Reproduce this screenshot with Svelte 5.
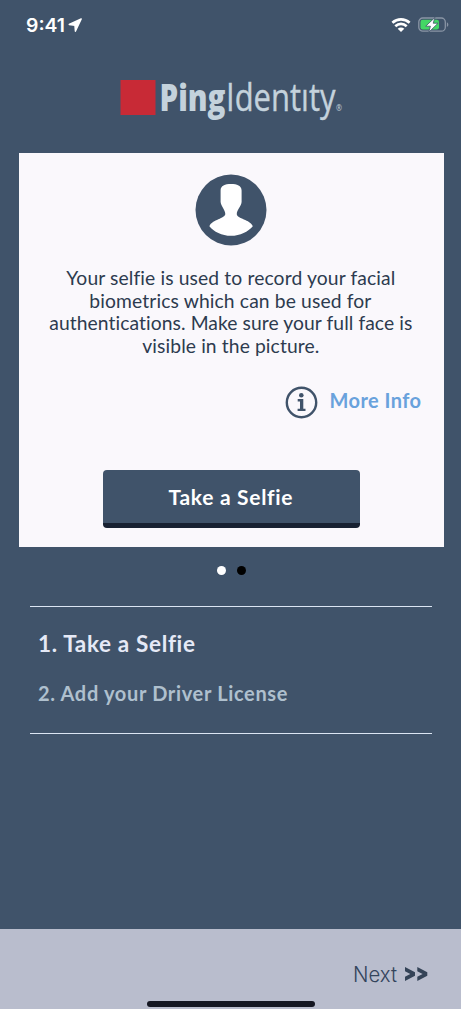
<script>
  const lines = [
    { text: 'Your selfie is used to record your facial', width: 329 },
    { text: 'biometrics which can be used for', width: 282 },
    { text: 'authentications. Make sure your full face is', width: 363 },
    { text: 'visible in the picture.', width: 177 }
  ];
</script>

<main>
  <header class="status">
    <svg class="time" width="64" height="24" viewBox="0 0 64 24">
      <text x="0" y="19.500" textLength="39" lengthAdjust="spacingAndGlyphs">9:41</text>
      <path d="M55.200 6.900 43.200 12.500l5.700.7.500 6z" fill="#fff" stroke="#fff" stroke-width="1.400" stroke-linejoin="round" />
    </svg>
    <svg class="wifi" width="20" height="16" viewBox="0 0 20 16">
      <g fill="none" stroke="#fff" stroke-width="2.700">
        <path d="M1.400 5.800c5-4.500 12.200-4.500 17.200 0" />
        <path d="M4.300 9.200c3.300-3 8.100-3 11.400 0" />
      </g>
      <path d="M6.700 11.800c1.900-1.700 4.700-1.700 6.600 0L10 15z" fill="#fff" />
    </svg>
    <svg class="battery" width="31" height="16" viewBox="0 0 31 16">
      <rect x=".8" y="1" width="26.500" height="13.200" rx="4" fill="none" stroke="#8995a5" stroke-width="1.300" />
      <rect x="2.500" y="2.800" width="18.500" height="9.700" rx="2.300" fill="#43d765" />
      <path d="M28.900 5.300v4.800c2-1 2-3.800 0-4.800z" fill="#8995a5" />
      <path d="m17 .4-9.300 8.800h4.700l-1.600 6 9.300-9h-4.900z" fill="#fff" stroke="#40536a" stroke-width=".8" />
    </svg>
  </header>

  <div class="brand">
    <svg width="223" height="44" viewBox="0 0 223 44">
      <rect x=".5" y="3" width="35" height="35" fill="#c82a36" />
      <g class="logo-text">
        <text class="ping" x="39.500" y="34" textLength="66" lengthAdjust="spacingAndGlyphs">Ping</text>
        <text class="identity" x="106" y="34" textLength="109.500" lengthAdjust="spacingAndGlyphs">Identıty</text>
        <text class="registered" x="216" y="33.500" textLength="6" lengthAdjust="spacingAndGlyphs">®</text>
      </g>
    </svg>
  </div>

  <section class="card">
    <svg class="avatar" width="72" height="72" viewBox="0 0 72 72">
      <circle cx="36" cy="36" r="35.500" fill="#40536a" />
      <path d="M36 10c-6 0-10.400 1.700-10.400 6.400v11.500c.6 4.700 4.800 7.900 4.700 12.200-.1 4.500-13 5.500-15.900 12.100 4.300 5.500 12.500 9.600 21.600 9.600 9.300 0 17.100-4.100 21.800-9.600C55.200 45.600 42 44.800 41.800 40.300c-.2-4.500 4.400-7.700 4.800-12.400V16.400c0-4.700-4.600-6.400-10.600-6.400z" fill="#fff" />
    </svg>
    <p class="copy">
      {#each lines as line}
        <svg width={line.width} height="22.650"><text x="-.7" y="17.300" textLength={line.width}>{line.text}</text></svg>
      {/each}
    </p>
    <div class="info">
      <svg width="33" height="33" viewBox="0 0 33 33">
        <circle cx="16.500" cy="16.500" r="14.700" fill="none" stroke="#40536a" stroke-width="2.400" />
        <circle cx="16.300" cy="9.200" r="2.300" fill="#40536a" />
        <path d="M12.700 13.100h5.600v9.600h2.200V25h-7.900v-2.300H15v-7.300h-2.300z" fill="#40536a" />
      </svg>
      <svg class="more" width="92" height="25"><text x="-.5" y="17.500" textLength="91.500">More Info</text></svg>
    </div>
    <button><svg width="124" height="28"><text x="-.5" y="23.500" textLength="124">Take a Selfie</text></svg></button>
  </section>

  <div class="dots"><i class="on"></i><i></i></div>

  <section class="steps">
    <svg class="current" width="158" height="30"><text x="0" y="22.500" textLength="157">1. Take a Selfie</text></svg>
    <svg class="later" width="251" height="28"><text x="0" y="19.500" textLength="249.500">2. Add your Driver License</text></svg>
  </section>

  <footer>
    <div class="next">
      <svg width="76" height="26" viewBox="0 0 76 26">
        <text x="0" y="19" textLength="44" lengthAdjust="spacingAndGlyphs">Next</text>
        <path d="m52 4 10 5.300v3.400L52 18v-4.300l5.300-2.700L52 8.300zM64.300 4l10 5.300v3.400l-10 5.300v-4.300l5.300-2.700-5.300-2.700z" fill="#344357" />
      </svg>
    </div>
    <div class="home"></div>
  </footer>
</main>

<style>
  main { width: 461px; height: 1009px; display: flex; flex-direction: column; background: #40536a; overflow: hidden; font-family: Lato, sans-serif; font-variant-ligatures: none; }
  svg { display: block; flex: none; overflow: visible; }
  .status { display: flex; height: 50px; padding: 12px 12px 0 26px; box-sizing: border-box; }
  .time text { font: 600 19px Inter, sans-serif; fill: #fff; }
  .wifi { margin: 5px 7px 0 auto; }
  .battery { margin-top: 5px; }
  .brand { height: 103px; display: flex; padding: 27px 0 0 120px; box-sizing: border-box; }
  .logo-text { fill: #c4d2dc; font-family: "Open Sans", sans-serif; }
  .ping { font-size: 37px; font-weight: 800; }
  .identity { font-size: 38px; font-weight: 400; stroke: #c4d2dc; stroke-width: .4; }
  .registered { font-size: 9px; }
  .card { height: 394px; margin: 0 17.500px 0 18.500px; display: flex; flex-direction: column; align-items: center; background: #faf8fc; box-sizing: border-box; padding-top: 21px; flex: none; }
  .copy { margin: 22px 0 0; display: flex; flex-direction: column; align-items: center; }
  .copy text { font-size: 19.300px; fill: #2d3b4f; }
  .info { display: flex; align-self: flex-end; align-items: center; gap: 12px; margin: 27px 21.500px 0 0; }
  .more text { font-size: 20px; font-weight: 700; fill: #69a2dc; }
  button { width: 257px; height: 58px; margin: 51px 0 0; padding: 0 0 2px; display: flex; justify-content: center; align-items: center; border: 0; border-bottom: 5px solid #182132; border-radius: 4px; background: #40536a; font: inherit; }
  button text { font-size: 21px; font-weight: 700; fill: #fff; }
  .dots { display: flex; justify-content: center; gap: 11px; height: 59px; padding: 18.500px 0 0 1px; box-sizing: border-box; flex: none; }
  .dots i { width: 9px; height: 9px; border-radius: 50%; background: #000; }
  .dots .on { background: #fff; }
  .steps { height: 128px; margin: 0 29px 0 30px; padding: 22px 8px 0; box-sizing: border-box; display: flex; flex-direction: column; gap: 22px; border: solid #dbe5f3; border-width: 1px 0; flex: none; }
  .current text { font-size: 22.500px; font-weight: 700; fill: #e5e9f6; }
  .later text { font-size: 20px; font-weight: 700; fill: #afc0ce; }
  footer { height: 80px; margin-top: auto; background: #b9bdcd; display: flex; flex-direction: column; flex: none; }
  .next { display: flex; justify-content: flex-end; height: 72px; padding: 34px 32px 0 0; box-sizing: border-box; }
  .next text { font: 300 21px Inter, sans-serif; fill: #34445c; }
  .home { width: 168px; height: 6px; margin-left: 147px; border-radius: 3px; background: #151722; }
</style>
